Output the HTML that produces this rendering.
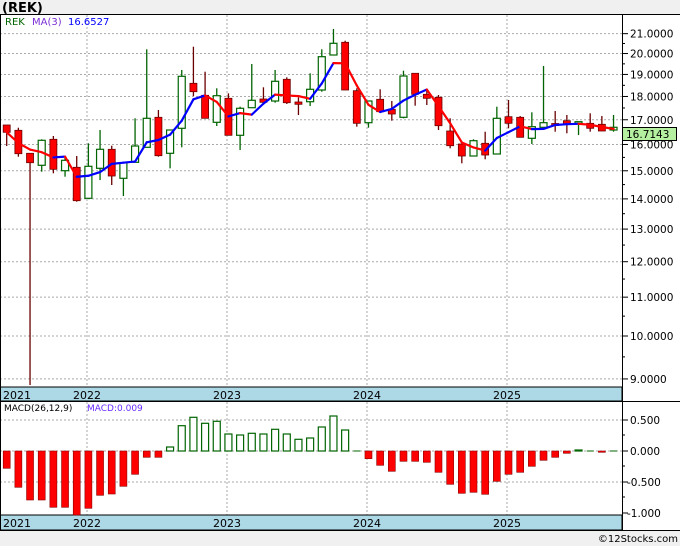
<!DOCTYPE html>
<html><head><meta charset="utf-8"><style>
html,body{margin:0;padding:0;background:#f0f0f0;}
body{width:680px;height:546px;overflow:hidden;position:relative;font-family:"DejaVu Sans","Liberation Sans",sans-serif;}
</style></head><body>
<svg id="s" width="680" height="546" xmlns="http://www.w3.org/2000/svg" style="position:absolute;left:0;top:0">
<rect x="0" y="0" width="680" height="546" fill="#f0f0f0"/>
<rect x="0" y="14" width="680" height="516" fill="#fff"/>
<text x="2" y="12" font-family="DejaVu Sans,sans-serif" font-weight="bold" font-size="13" fill="#000">(REK)</text>
<g id="g"></g>
<text x="5" y="25" font-size="10" fill="#006400">REK</text>
<text x="32" y="25" font-size="10" fill="#7b2fd6">MA(3)</text>
<text x="68" y="25" font-size="10" fill="#0000ff">16.6527</text>
<text x="4" y="411" font-size="9" fill="#000">MACD(26,12,9)</text>
<text x="87" y="411" font-size="9" fill="#6a2bff">MACD:0.009</text>
<text x="678" y="542" font-size="10" fill="#000" text-anchor="end">©12Stocks.com</text>
</svg>
<script>
var NS="http://www.w3.org/2000/svg",g=document.getElementById('g');
function el(t,a){var e=document.createElementNS(NS,t);for(var k in a)e.setAttribute(k,a[k]);g.appendChild(e);return e;}
function tx(x,y,s,a){var e=el('text',Object.assign({x:x,y:y,'font-size':10.5,fill:'#000'},a||{}));e.textContent=s;}
var B=407.5,A=1274.3;function py(p){return A-B*Math.log(p);}
var prices=[21,20,19,18,17,16,15,14,13,12,11,10,9];
prices.forEach(function(p){var y=py(p);el('line',{x1:0,x2:622,y1:y,y2:y,stroke:'#aaa','stroke-dasharray':'2,2'});
 el('line',{x1:622,x2:628,y1:y,y2:y,stroke:'#000'});tx(630,y+4,p.toFixed(4));});
for(var i=0;i<prices.length-1;i++){var y=py((prices[i]+prices[i+1])/2);el('line',{x1:622,x2:625,y1:y,y2:y,stroke:'#000'});}
[87,227,367,507].forEach(function(x){el('line',{x1:x,x2:x,y1:15,y2:387,stroke:'#aaa','stroke-dasharray':'2,2'});el('line',{x1:x,x2:x,y1:402,y2:515,stroke:'#aaa','stroke-dasharray':'2,2'});});
[420,451,482].forEach(function(y){el('line',{x1:0,x2:622,y1:y,y2:y,stroke:'#aaa','stroke-dasharray':'2,2'});});
[[420,'0.500'],[451,'0.000'],[482,'-0.500'],[513,'-1.000']].forEach(function(a){el('line',{x1:622,x2:628,y1:a[0],y2:a[0],stroke:'#000'});tx(a[1][0]=='-'?627:630,a[0]+4,a[1]);});
[435,466,497].forEach(function(y){el('line',{x1:622,x2:625,y1:y,y2:y,stroke:'#000'});});
// candles: [bodyTop, bodyBot, high, low, red?]
var C=[[125,132.3,125,146,1],[130.3,153.7,127.7,156.7,1],[153.3,162.7,153,385,1],[140.3,165.3,139.3,171.7,0],[139.3,169.3,136,173.3,1],[160.3,170.7,156.7,176.7,0],[167.3,200.7,156,201.7,1],[166.3,198.3,143.3,198.3,0],[149.3,168.3,130,180,0],[149.3,176,145.7,185,1],[162.7,178.3,162.7,196,0],[146,162.3,118.3,162.3,0],[118.3,147.3,49.3,147.3,0],[117.3,155.7,110,156.7,1],[130,153.3,130,168.3,0],[76.3,128.3,70,147.3,0],[83.3,91.7,46.7,96,1],[95.3,118.3,71.7,118.3,1],[95.7,122.3,88.3,126,0],[98.3,135.3,93.3,135.3,1],[108.3,135.3,106.7,150,0],[100.3,107.7,64,107.7,0],[99,102.3,87.3,102.3,1],[81.3,101,70,102.7,0],[79.3,102.7,77.3,104,1],[102,104.3,97.3,115,1],[89.3,101.7,73.3,106,0],[56.7,90,49.3,91.7,0],[43.3,55,29,55,0],[42.3,90,40.7,90,1],[90.7,123.3,88.3,126.7,1],[101,122.7,101,127.7,0],[99.3,111.7,89.3,111.7,1],[109.3,114,101,120.7,1],[76,117.3,70.7,118.3,0],[73.3,94.3,73.3,105.7,1],[94.3,98.3,90,105,1],[97.3,125.7,95,130,1],[131,145.7,118.3,148.3,1],[144,156,144,163.3,1],[140.7,156,139.3,156,0],[143.3,155,131.7,159.3,1],[118.3,154,106.7,154,0],[116.7,123.3,100,128.3,1],[117.3,137.3,116,137.3,1],[126.7,138.3,112.3,144,0],[122.7,127.3,66,127.3,0],[123.5,125.5,111,131.7,1],[120.7,124.3,115,133.3,1],[121.7,123.3,121.7,135,0],[123.3,128.3,113.3,131.7,1],[124.3,131,116,131,1],[127.3,130,115,131.7,0]];
function cx(i){return 6.7+11.67*i;}
var closes=[];
C.forEach(function(c,i){var x=cx(i),r=c[4];closes.push(r?c[1]:c[0]);
 el('line',{x1:x,x2:x,y1:c[2],y2:c[3],stroke:r?'#6b0000':'#006400','stroke-width':1.3});
 if(r)el('rect',{x:x-3.5,y:c[0],width:7,height:Math.max(1.5,c[1]-c[0]),fill:'#ff0000',stroke:'#6b0000','stroke-width':0.8});
 else el('rect',{x:x-3.5,y:c[0],width:7,height:Math.max(1.5,c[1]-c[0]),fill:'#fff',stroke:'#006400','stroke-width':1.2});
});
var ma=closes.map(function(c,i){var a=closes.slice(Math.max(0,i-2),i+1);return a.reduce(function(s,v){return s+v;},0)/a.length;});
for(var i=1;i<ma.length;i++){el('line',{x1:cx(i-1),y1:ma[i-1],x2:cx(i),y2:ma[i],stroke:ma[i]<ma[i-1]?'#0000ff':'#ff0000','stroke-width':2.2,'stroke-linecap':'round'});}
// price tag
el('rect',{x:622.5,y:127.5,width:54,height:13,fill:'#b4f0a0',stroke:'#000'});
tx(626,138,'16.7143');
// date bands
[[387,401],[515,530]].forEach(function(b){el('rect',{x:0,y:b[0],width:622,height:b[1]-b[0],fill:'#add8e6',stroke:'#000','stroke-width':1});
 tx(3,b[0]+12,'2021',{'font-size':11});[[87,'2022'],[227,'2023'],[367,'2024'],[507,'2025']].forEach(function(a){tx(a[0]-14,b[0]+12,a[1],{'font-size':11});});});
el('line',{x1:0,x2:622,y1:401.5,y2:401.5,stroke:'#000'});
// MACD
var M=[468.3,487.3,500,500,507.3,507.3,515,508.3,495.3,494,486.3,474.3,457.3,457.3,447,425.7,417.3,423.3,421.3,434,435,433.3,434,429.3,434,439.3,438,427,416,430,451,458.7,465.3,471.3,461.3,461.3,462.3,472.3,484.3,493.3,492.3,494.3,481.3,474.3,472.3,466.3,460.3,457.3,453.3,450,451,452.3,451];
M.forEach(function(v,i){var x=cx(i);if(Math.abs(v-451)<0.6){el('line',{x1:x-3.5,x2:x+3.5,y1:451,y2:451,stroke:'#006400'});return;}
 if(v>451)el('rect',{x:x-3.5,y:451,width:7,height:v-451,fill:'#ff0000',stroke:'#8b0000','stroke-width':0.6});
 else el('rect',{x:x-3.5,y:v,width:7,height:451-v,fill:'#fff',stroke:'#006400','stroke-width':1.2});});
// frame
el('line',{x1:622.5,x2:622.5,y1:14,y2:530,stroke:'#000'});
el('line',{x1:0,x2:680,y1:14.5,y2:14.5,stroke:'#000'});
el('line',{x1:0,x2:680,y1:530.5,y2:530.5,stroke:'#000'});
el('line',{x1:0.5,x2:0.5,y1:14,y2:530,stroke:'#000'});
el('line',{x1:622,x2:680,y1:401.5,y2:401.5,stroke:'#000'});
</script>
</body></html>
